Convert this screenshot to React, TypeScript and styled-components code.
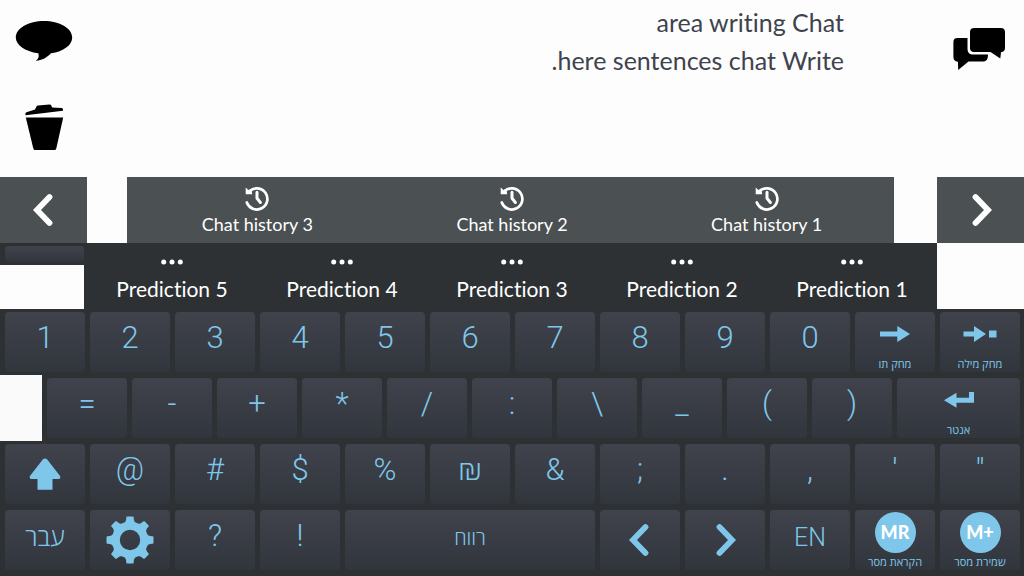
import React from "react";
import styled, { createGlobalStyle } from "styled-components";

const color = {
  board: "#2e3133",
  panel: "#4b5053",
  paper: "#fdfdfd",
  accent: "#7fc7ea",
  ink: "#3f434d",
};

const GlobalStyle = createGlobalStyle`
  *, *::before, *::after { box-sizing: border-box; }
  body {
    margin: 0;
    background: ${color.paper};
    font-family: Lato, "Open Sans", "Liberation Sans", sans-serif;
    font-variant-ligatures: none;
  }
  button, textarea { font: inherit; font-variant-ligatures: none; color: inherit; border: 0; padding: 0; margin: 0; }
  button { cursor: pointer; background: none; }
  svg { display: block; }
`;

const Page = styled.main`
  min-height: 100vh;
  display: flex;
  flex-direction: column;
`;

const Writer = styled.section`
  display: grid;
  grid-template-columns: 88fr 756fr 90fr 90fr;
  min-height: 177px;
`;

const Tools = styled.div`
  display: flex;
  flex-direction: column;
  gap: 4px;
`;

const ToolButton = styled.button`
  height: 82px;
  display: flex;
  align-items: center;
  justify-content: center;
  color: #000;
`;

const Draft = styled.textarea`
  width: 100%;
  height: 100%;
  padding-top: 3px;
  background: transparent;
  color: ${color.ink};
  font-size: 25px;
  line-height: 38px;
  text-align: right;
  resize: none;
  outline: none;
  overflow: hidden;
`;

const ChatsButton = styled(ToolButton)`
  grid-column: 4;
  height: 98px;
`;

const HistoryBar = styled.nav`
  display: grid;
  grid-template-columns: 87fr 40fr 767fr 43fr 87fr;
  height: 66px;
`;

const PageButton = styled.button<{ $col: number }>`
  grid-column: ${(p) => p.$col};
  background: ${color.panel};
  color: #fff;
  display: flex;
  align-items: center;
  justify-content: center;
`;

const HistoryList = styled.div`
  grid-column: 3;
  display: grid;
  grid-template-columns: repeat(3, 1fr);
  padding-left: 3px;
  background: ${color.panel};
`;

const HistoryButton = styled.button`
  display: flex;
  flex-direction: column;
  align-items: center;
  padding-top: 9px;
  gap: 2px;
  color: #fff;
  font-size: 18px;
  line-height: 22px;
`;

const PredictionBar = styled.div`
  display: grid;
  grid-template-columns: 84fr 853fr 87fr;
  height: 66px;
`;

const ShortSlot = styled.div`
  height: 22px;
  padding: 3px 0 3px 5px;
  background: ${color.board};
`;

const PredictionList = styled.div`
  display: grid;
  grid-template-columns: repeat(5, 1fr);
  padding-left: 3px;
  background: ${color.board};
`;

const PredictionButton = styled.button`
  display: flex;
  flex-direction: column;
  align-items: center;
  padding-top: 16px;
  gap: 10px;
  color: #fff;
  font-size: 21px;
  line-height: 27px;
`;

const Keyboard = styled.section`
  flex: 1;
  background: ${color.board};
`;

const KeyRow = styled.div`
  display: grid;
  grid-template-columns: repeat(12, minmax(0, 1fr));
  gap: 5px;
  padding: 3px 4px 3px 5px;
  background: ${color.board};
`;

const IndentedRow = styled.div`
  display: grid;
  grid-template-columns: 42fr 982fr;
  background: #fafafa;

  & > ${KeyRow} {
    grid-column: 2;
    grid-template-columns: repeat(10, minmax(0, 80fr)) minmax(0, 123fr);
  }
`;

const keySurface = `
  border-radius: 4px;
  background: linear-gradient(#40434c, #31353c);
`;

const ShortKey = styled.button`
  ${keySurface}
  display: block;
  width: 100%;
  height: 16px;
`;

const Key = styled.button<{ $span?: number }>`
  ${keySurface}
  grid-column: span ${(p) => p.$span ?? 1};
  height: 60px;
  display: flex;
  flex-direction: column;
  align-items: center;
  color: ${color.accent};
`;

const Glyph = styled.span`
  font-family: Roboto, "Open Sans", "Liberation Sans", sans-serif;
  font-size: 31px;
  font-weight: 300;
  line-height: 52px;
`;

const Word = styled.span<{ $size: number }>`
  font-family: Roboto, "Open Sans", "Liberation Sans", sans-serif;
  font-size: ${(p) => p.$size}px;
  font-weight: 300;
  line-height: 56px;
`;

const Center = styled.span`
  flex: 1;
  display: flex;
  align-items: center;
`;

const Caption = styled.span`
  font-size: 11px;
  line-height: 16px;
  white-space: nowrap;
`;

const Badge = styled.span`
  width: 41px;
  height: 41px;
  border-radius: 50%;
  background: ${color.accent};
  color: #fff;
  font-size: 18px;
  font-weight: 900;
  line-height: 41px;
  text-align: center;
`;

const Chevron = ({ right = false }: { right?: boolean }) => (
  <svg width="22" height="34" viewBox="0 0 22 34" fill="none" stroke="currentColor" strokeWidth="5.8" strokeLinecap="round">
    <path d={right ? "M5.500 4 18 17 5.500 30" : "M16.500 4 4 17l12.500 13"} />
  </svg>
);

const SpeechIcon = () => (
  <svg width="58" height="42" viewBox="0 0 58 42" fill="currentColor">
    <path d="M29 1C13.500 1 .8 8.300.8 17.500c0 7.500 9 13.900 22.500 15.800 1 3.200.3 5.600-2.600 7.500 6.600-.4 11.600-3.400 15.300-7.500C48.500 31.500 57.200 25.200 57.200 17.500 57.200 8.300 44.500 1 29 1Z" />
  </svg>
);

const TrashIcon = () => (
  <svg width="40" height="48" viewBox="0 0 40 48" fill="currentColor">
    <path d="M1.500 12.200c-.3-1.700 0-2.500 1-2.900L11 6.600l1.500-3.200c.3-.5.800-.7 1.500-.8L25.500 1.400c.8 0 1.300.2 1.500.7l1.200 2.300 9.300.5c1.200.2 1.700 1 1.500 2.800Z" />
    <path d="M1.800 14.500h37.400l-6.800 30.400c-.4 1.700-1 2.200-2.500 2.200H11.700c-1.400 0-2.100-.6-2.500-2.200Z" />
  </svg>
);

const ChatsIcon = () => (
  <svg width="52" height="44" viewBox="0 0 52 44" fill="currentColor">
    <path d="M21 1h27c2.500 0 4 1.500 4 4v16c0 2.600-1.400 4-4 4.200l-.7 6.300-9.800-6.500H21c-2.500 0-4-1.500-4-4V5c0-2.500 1.500-4 4-4Z" />
    <path d="M4.500 11h10v10.500c0 4.300 2 6.100 6 6.100H35c0 4.500-1.500 7-5 7H15.500L5.200 43l-.3-8.200C1.800 34.400.4 33 .4 30V15.200C.4 12.400 1.700 11 4.500 11Z" />
  </svg>
);

const HistoryIcon = () => (
  <svg width="24" height="25" viewBox="0 0 24 25" fill="none" stroke="currentColor" strokeWidth="2.700" strokeLinecap="round" strokeLinejoin="round">
    <path d="M1.800 16.500A10.600 10.600 0 1 0 4.500 5.200" />
    <path d="M12 6.300v6l3.400 4.200" strokeWidth="3" />
    <path d="M.7 1.600 3.400 4l3-1 .8 5.200H.7Z" fill="currentColor" stroke="none" />
  </svg>
);

const DotsIcon = () => (
  <svg width="22" height="6" viewBox="0 0 22 6" fill="currentColor">
    <circle cx="2.700" cy="3" r="2.500" />
    <circle cx="11" cy="3" r="2.500" />
    <circle cx="19.300" cy="3" r="2.500" />
  </svg>
);

const DeleteCharIcon = () => (
  <svg width="30" height="16" viewBox="0 0 30 16" fill="currentColor">
    <path d="M0 5.500h17.300V0L30 8 17.300 16v-5.500H0Z" />
  </svg>
);

const DeleteWordIcon = () => (
  <svg width="34" height="16" viewBox="0 0 34 16" fill="currentColor">
    <path d="M.5 5.500H11V0l12 8-12 8v-5.500H.5ZM26 4.500h7.500v7H26Z" />
  </svg>
);

const EnterIcon = () => (
  <svg width="30" height="16" viewBox="0 0 30 16" fill="currentColor">
    <path d="M0 8.300 12.500.8v5H25V0h5v10.800H12.500v5Z" />
  </svg>
);

const ShiftIcon = () => (
  <svg width="32" height="32" viewBox="0 0 32 32" fill="currentColor">
    <path d="M13.800 1.600c1.300-1.500 3.100-1.500 4.400 0L30.700 17.500c1.300 1.800.7 3.500-1.400 3.500H23.500v10.700h-15V21H2.700C.6 21 0 19.300 1.300 17.500Z" />
  </svg>
);

const GearIcon = () => (
  <svg width="48" height="48" viewBox="-24 -24 48 48">
    <circle r="14.200" fill="none" stroke="currentColor" strokeWidth="8" />
    {[0, 45, 90, 135, 180, 225, 270, 315].map((angle) => (
      <path
        key={angle}
        transform={`rotate(${angle})`}
        fill="currentColor"
        d="M-6.500-16.500C-4.500-18-3.800-19-3.700-22.300c0-.9.300-1.200 1.200-1.200h5c.9 0 1.200.3 1.200 1.200C3.800-19 4.500-18 6.500-16.500L5-14H-5Z"
      />
    ))}
  </svg>
);

const glyphKeys = (chars: string[]) =>
  chars.map((char) => (
    <Key key={char} type="button">
      <Glyph>{char}</Glyph>
    </Key>
  ));

interface CaptionKeyProps {
  caption: string;
  children: React.ReactNode;
}

const CaptionKey = ({ caption, children }: CaptionKeyProps) => (
  <Key type="button">
    <Center>{children}</Center>
    <Caption>{caption}</Caption>
  </Key>
);

export default function App() {
  return (
    <Page>
      <GlobalStyle />
      <Writer>
        <Tools>
          <ToolButton type="button" aria-label="Speak">
            <SpeechIcon />
          </ToolButton>
          <ToolButton type="button" aria-label="Clear">
            <TrashIcon />
          </ToolButton>
        </Tools>
        <Draft
          aria-label="Chat"
          spellCheck={false}
          defaultValue={"area writing Chat\n.here sentences chat Write"}
        />
        <ChatsButton type="button" aria-label="Chats">
          <ChatsIcon />
        </ChatsButton>
      </Writer>

      <HistoryBar>
        <PageButton type="button" $col={1} aria-label="Older">
          <Chevron />
        </PageButton>
        <HistoryList>
          {[3, 2, 1].map((n) => (
            <HistoryButton key={n} type="button">
              <HistoryIcon />
              <span>Chat history {n}</span>
            </HistoryButton>
          ))}
        </HistoryList>
        <PageButton type="button" $col={5} aria-label="Newer">
          <Chevron right />
        </PageButton>
      </HistoryBar>

      <PredictionBar>
        <ShortSlot>
          <ShortKey type="button" aria-label="Blank" />
        </ShortSlot>
        <PredictionList>
          {[5, 4, 3, 2, 1].map((n) => (
            <PredictionButton key={n} type="button">
              <DotsIcon />
              <span>Prediction {n}</span>
            </PredictionButton>
          ))}
        </PredictionList>
      </PredictionBar>

      <Keyboard>
        <KeyRow>
          {glyphKeys(["1", "2", "3", "4", "5", "6", "7", "8", "9", "0"])}
          <CaptionKey caption="מחק תו">
            <DeleteCharIcon />
          </CaptionKey>
          <CaptionKey caption="מחק מילה">
            <DeleteWordIcon />
          </CaptionKey>
        </KeyRow>
        <IndentedRow>
          <KeyRow>
            {glyphKeys(["=", "-", "+", "*", "/", ":", "\\", "_", "(", ")"])}
            <CaptionKey caption="אנטר">
              <EnterIcon />
            </CaptionKey>
          </KeyRow>
        </IndentedRow>
        <KeyRow>
          <Key type="button" aria-label="Shift">
            <Center>
              <ShiftIcon />
            </Center>
          </Key>
          {glyphKeys(["@", "#", "$", "%", "₪", "&", ";", ".", ",", "'", '"'])}
        </KeyRow>
        <KeyRow>
          <Key type="button">
            <Word $size={25}>עבר</Word>
          </Key>
          <Key type="button" aria-label="Settings">
            <Center>
              <GearIcon />
            </Center>
          </Key>
          {glyphKeys(["?", "!"])}
          <Key type="button" $span={3}>
            <Word $size={20}>רווח</Word>
          </Key>
          <Key type="button" aria-label="Left">
            <Center>
              <Chevron />
            </Center>
          </Key>
          <Key type="button" aria-label="Right">
            <Center>
              <Chevron right />
            </Center>
          </Key>
          <Key type="button">
            <Word $size={25}>EN</Word>
          </Key>
          <CaptionKey caption="הקראת מסר">
            <Badge>MR</Badge>
          </CaptionKey>
          <CaptionKey caption="שמירת מסר">
            <Badge>M+</Badge>
          </CaptionKey>
        </KeyRow>
      </Keyboard>
    </Page>
  );
}
